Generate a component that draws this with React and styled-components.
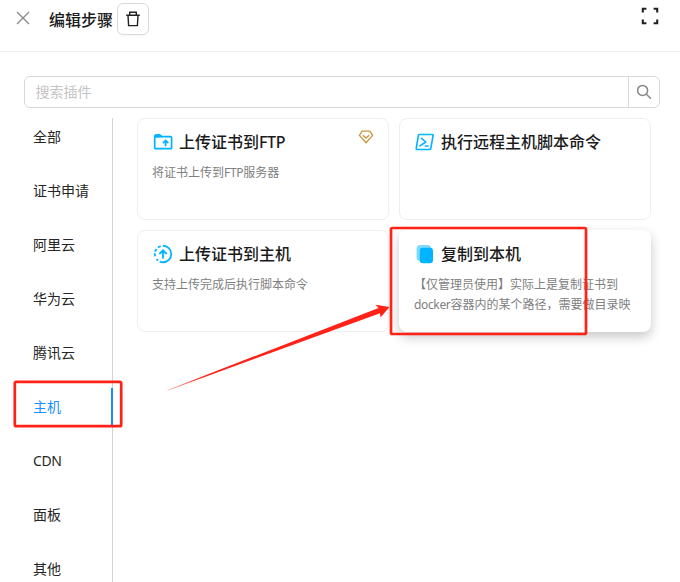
import React from "react";
import styled, { createGlobalStyle } from "styled-components";

const Global = createGlobalStyle`
  * { box-sizing: border-box; }
  body {
    margin: 0;
    background: #fff;
    color: rgba(0, 0, 0, 0.88);
    font-family: "Noto Sans", "Noto Sans CJK SC", sans-serif;
    font-size: 14px;
    line-height: 22px;
  }
`;

const Page = styled.div`
  position: relative;
  width: 680px;
  height: 582px;
  overflow: hidden;
`;
const Header = styled.header`
  display: flex;
  align-items: flex-start;
  height: 52px;
  padding: 3px 21px 0 16px;
  border-bottom: 1px solid #eeeeee;
`;
const CloseButton = styled.button`
  display: flex;
  width: 14px;
  height: 14px;
  margin: 8px 19px 0 0;
  padding: 0;
  border: 0;
  background: none;
  color: #8a8a8a;
`;
const Title = styled.h1`
  margin: 5px 4px 0 0;
  font-size: 16px;
  font-weight: 500;
  line-height: 24px;
  color: #1a1a1a;
`;
const DeleteButton = styled.button`
  display: flex;
  align-items: center;
  justify-content: center;
  width: 32px;
  height: 32px;
  padding: 0;
  border: 1px solid #d9d9d9;
  border-radius: 6px;
  background: #fff;
  box-shadow: 0 2px 0 rgba(0, 0, 0, 0.02);
  color: #222;
`;
const FullscreenButton = styled.button`
  display: flex;
  margin: 4px 0 0 auto;
  padding: 0;
  border: 0;
  background: none;
  color: #222;
`;
const Search = styled.div`
  display: flex;
  width: 636px;
  height: 32px;
  margin: 24px 0 10px 24px;
  border: 1px solid #d9d9d9;
  border-radius: 6px;
`;
const SearchInput = styled.input`
  flex: 1;
  min-width: 0;
  padding: 0 10.5px;
  border: 0;
  outline: 0;
  background: none;
  font: inherit;
  &::placeholder { color: #c4c4c4; opacity: 1; }
`;
const SearchButton = styled.button`
  display: flex;
  align-items: center;
  justify-content: center;
  width: 31px;
  padding: 0;
  border: 0;
  border-left: 1px solid #d9d9d9;
  background: none;
  color: #858585;
`;
const Body = styled.div`
  display: flex;
  align-items: flex-start;
  padding-left: 24px;
`;
const Tabs = styled.nav`
  display: flex;
  flex-direction: column;
  gap: 16px;
  width: 89px;
  height: 464px;
  border-right: 1px solid #d3d3d3;
`;
const Tab = styled.button`
  flex: none;
  width: 89px;
  height: 38px;
  padding: 0 0 0 9px;
  border: 0;
  border-right: 2px solid ${(p) => (p.$active ? "#1890ff" : "transparent")};
  background: none;
  color: ${(p) => (p.$active ? "#1890ff" : "#262626")};
  font: inherit;
  text-align: left;
`;
const Cards = styled.main`
  display: grid;
  grid-template-columns: 252px 252px;
  grid-auto-rows: 102px;
  gap: 10px;
  margin-left: 24px;
`;
const Card = styled.article`
  padding: 11px 14px 0;
  border: 1px solid ${(p) => (p.$raised ? "transparent" : "#eeeeee")};
  border-radius: 8px;
  background: #fff;
  box-shadow: ${(p) => (p.$raised ? "0 5px 12px rgba(0, 0, 0, 0.22)" : "none")};
`;
const CardHead = styled.div`
  display: flex;
  align-items: center;
  height: 24px;
  gap: 5px;
  svg { flex: none; }
`;
const CardTitle = styled.h2`
  margin: 0;
  flex: 1;
  font-size: 16px;
  font-weight: 500;
  line-height: 24px;
  color: #1a1a1a;
  white-space: nowrap;
`;
const CardText = styled.p`
  width: 222px;
  height: 40px;
  margin: 9px 0 0;
  overflow: hidden;
  color: #808080;
  font-size: 12px;
  line-height: 20px;
  white-space: pre-line;
`;
const Latin = styled.span`
  letter-spacing: -0.35px;
`;
const Badge = styled.span`
  display: flex;
  margin-top: -11px;
`;
const Annotations = styled.svg`
  position: absolute;
  inset: 0;
  pointer-events: none;
`;

const CloseIcon = () => (
  <svg width="14" height="14" viewBox="0 0 14 14" fill="none" stroke="currentColor" strokeWidth="1.4">
    <path d="M1 1l12 12M13 1L1 13" />
  </svg>
);
const TrashIcon = () => (
  <svg width="16" height="16" viewBox="0 0 16 16" fill="none" stroke="currentColor" strokeWidth="1.4">
    <path d="M1.2 4.2h13.6M4.7 4V1.3h6.6V4M3 4.4l.6 10.2h8.8L13 4.4" />
  </svg>
);
const FullscreenIcon = () => (
  <svg width="18" height="18" viewBox="0 0 18 18" fill="none" stroke="currentColor" strokeWidth="2.1">
    <path d="M1.8 5.4V1.8h3.6M12.6 1.8h3.6v3.6M16.2 12.6v3.6h-3.6M5.4 16.2H1.8v-3.6" />
  </svg>
);
const SearchIcon = () => (
  <svg width="16" height="16" viewBox="0 0 16 16" fill="none" stroke="currentColor" strokeWidth="1.5">
    <circle cx="6.6" cy="6.4" r="5" />
    <path d="M10.2 10l4.7 4.7" />
  </svg>
);
const FolderUpIcon = () => (
  <svg width="22" height="22" viewBox="0 0 22 22" fill="none" stroke="#00b4ff">
    <path d="M2.6 6.2V4.6q0-1 1-1h4.6l1.9 2z" fill="#00b4ff" />
    <rect x="2.7" y="5.7" width="16.9" height="12" rx=".8" strokeWidth="1.7" />
    <path d="M13.6 15.2V9.6M10.9 12.1l2.7-2.7 2.7 2.7" strokeWidth="1.7" />
  </svg>
);
const TerminalIcon = () => (
  <svg width="22" height="22" viewBox="0 0 22 22" fill="none" stroke="#00b4ff" strokeWidth="1.6" strokeLinecap="round" strokeLinejoin="round">
    <path d="M5.2 3.5h13.1q1 0 .8 1l-2.3 13q-.2 1-1.2 1H3q-1 0-.8-1l2.2-13q.1-1 .8-1z" />
    <path d="M7.5 7.3l4.3 3.7-5.9 3.8M11.3 15h2.8" />
  </svg>
);
const UploadCircleIcon = () => (
  <svg width="22" height="22" viewBox="0 0 24 24" fill="none" stroke="#00b4ff" strokeWidth="2">
    <path d="M12 3a9 9 0 0 1 0 18" />
    <path d="M9.5 3.35A9 9 0 0 0 6.5 4.9M4.9 6.5A9 9 0 0 0 3.35 9.5M3 11.2a9 9 0 0 0 .35 3.3M4.9 17.5a9 9 0 0 0 1.6 1.6M8.5 20.3A9 9 0 0 0 12 21" />
    <path d="M12 17V8M8 12l4-4 4 4" />
  </svg>
);
const CopyIcon = () => (
  <svg width="22" height="22" viewBox="0 0 22 22" fill="#00b4ff">
    <rect x="2.6" y="2" width="14.5" height="16" rx="3.5" opacity=".5" />
    <rect x="5.8" y="4.7" width="13.2" height="15.5" rx="3" />
  </svg>
);
const GemIcon = () => (
  <svg width="16" height="16" viewBox="0 0 16 16" fill="none" stroke="#c9933c" strokeWidth="1.3" strokeLinejoin="round">
    <path d="M4.2 2.2h7.6L14.6 6.4 8 13.8 1.4 6.4z" />
    <path d="M4.9 6.3L8 9l3.1-2.7" />
  </svg>
);

const TABS = ["全部", "证书申请", "阿里云", "华为云", "腾讯云", "主机", "CDN", "面板", "其他"];
const PLUGINS = [
  { title: "上传证书到FTP", text: "将证书上传到FTP服务器", Icon: FolderUpIcon, premium: true },
  { title: "执行远程主机脚本命令", text: "", Icon: TerminalIcon },
  { title: "上传证书到主机", text: "支持上传完成后执行脚本命令", Icon: UploadCircleIcon },
  {
    title: "复制到本机",
    text: "【仅管理员使用】实际上是复制证书到\ndocker容器内的某个路径，需要做目录映",
    Icon: CopyIcon,
    raised: true,
  },
];

const MixedText = ({ children }) =>
  children
    .split(/([A-Za-z]+)/)
    .map((part, i) => (i % 2 ? <Latin key={i}>{part}</Latin> : part));

export default function App() {
  return (
    <Page>
      <Global />
      <Header>
        <CloseButton aria-label="关闭"><CloseIcon /></CloseButton>
        <Title>编辑步骤</Title>
        <DeleteButton aria-label="删除"><TrashIcon /></DeleteButton>
        <FullscreenButton aria-label="全屏"><FullscreenIcon /></FullscreenButton>
      </Header>
      <Search>
        <SearchInput placeholder="搜索插件" />
        <SearchButton aria-label="搜索"><SearchIcon /></SearchButton>
      </Search>
      <Body>
        <Tabs>
          {TABS.map((name) => (
            <Tab key={name} $active={name === "主机"}><MixedText>{name}</MixedText></Tab>
          ))}
        </Tabs>
        <Cards>
          {PLUGINS.map(({ title, text, Icon, premium, raised }) => (
            <Card key={title} $raised={raised}>
              <CardHead>
                <Icon />
                <CardTitle><MixedText>{title}</MixedText></CardTitle>
                {premium && <Badge><GemIcon /></Badge>}
              </CardHead>
              <CardText><MixedText>{text}</MixedText></CardText>
            </Card>
          ))}
        </Cards>
      </Body>
      <Annotations width="680" height="582" viewBox="0 0 680 582">
        <defs>
          <linearGradient id="tail" gradientUnits="userSpaceOnUse" x1="167" y1="390" x2="205" y2="375">
            <stop offset="0" stopColor="#ff2216" stopOpacity=".4" />
            <stop offset="1" stopColor="#ff2216" />
          </linearGradient>
        </defs>
        <g fill="none" stroke="#ff2216" strokeWidth="2.7">
          <rect x="391" y="228" width="195" height="106" rx="1.5" />
          <rect x="14.8" y="381.8" width="106.4" height="44.4" rx="1.5" />
        </g>
        <path fill="url(#tail)" d="M167 390.2L378.5 308 375.5 304.8 389.5 307 380.5 317.5 380 313.2 168 390.4z" />
      </Annotations>
    </Page>
  );
}
